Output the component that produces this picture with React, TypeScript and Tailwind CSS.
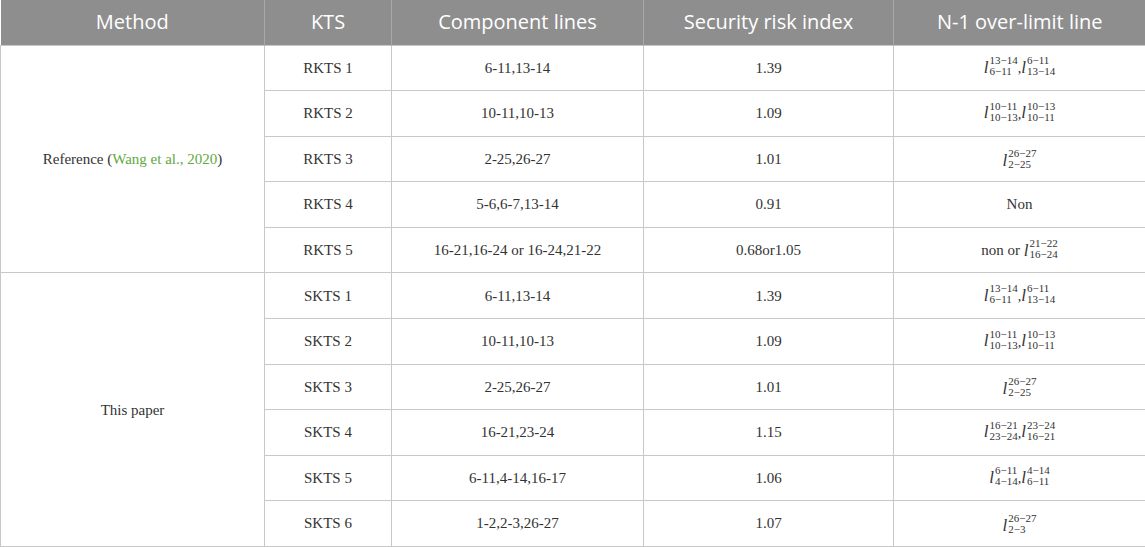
import React from "react";

type Line = { sup: string; sub: string };

type Row = {
  kts: string;
  lines: string;
  risk: string;
  over: React.ReactNode;
};

function L({ sup, sub }: Line) {
  return (
    <span className="inline-flex items-center align-middle">
      <span className="italic text-[17px] leading-none pr-[1px]">l</span>
      <span className="inline-flex flex-col text-left text-[11px] leading-[11px] -mt-[2px]">
        <span>{sup}</span>
        <span>{sub}</span>
      </span>
    </span>
  );
}

function Pair({ a, b }: { a: Line; b: Line }) {
  return (
    <span className="inline-flex items-end">
      <L {...a} />
      <span className="text-[14px] leading-none mb-[1px]">,</span>
      <L {...b} />
    </span>
  );
}

const reference: Row[] = [
  {
    kts: "RKTS 1",
    lines: "6-11,13-14",
    risk: "1.39",
    over: <Pair a={{ sup: "13−14", sub: "6−11" }} b={{ sup: "6−11", sub: "13−14" }} />,
  },
  {
    kts: "RKTS 2",
    lines: "10-11,10-13",
    risk: "1.09",
    over: <Pair a={{ sup: "10−11", sub: "10−13" }} b={{ sup: "10−13", sub: "10−11" }} />,
  },
  {
    kts: "RKTS 3",
    lines: "2-25,26-27",
    risk: "1.01",
    over: <L sup="26−27" sub="2−25" />,
  },
  { kts: "RKTS 4", lines: "5-6,6-7,13-14", risk: "0.91", over: "Non" },
  {
    kts: "RKTS 5",
    lines: "16-21,16-24 or 16-24,21-22",
    risk: "0.68or1.05",
    over: (
      <span className="inline-flex items-center">
        non or&nbsp;
        <L sup="21−22" sub="16−24" />
      </span>
    ),
  },
];

const paper: Row[] = [
  {
    kts: "SKTS 1",
    lines: "6-11,13-14",
    risk: "1.39",
    over: <Pair a={{ sup: "13−14", sub: "6−11" }} b={{ sup: "6−11", sub: "13−14" }} />,
  },
  {
    kts: "SKTS 2",
    lines: "10-11,10-13",
    risk: "1.09",
    over: <Pair a={{ sup: "10−11", sub: "10−13" }} b={{ sup: "10−13", sub: "10−11" }} />,
  },
  {
    kts: "SKTS 3",
    lines: "2-25,26-27",
    risk: "1.01",
    over: <L sup="26−27" sub="2−25" />,
  },
  {
    kts: "SKTS 4",
    lines: "16-21,23-24",
    risk: "1.15",
    over: <Pair a={{ sup: "16−21", sub: "23−24" }} b={{ sup: "23−24", sub: "16−21" }} />,
  },
  {
    kts: "SKTS 5",
    lines: "6-11,4-14,16-17",
    risk: "1.06",
    over: <Pair a={{ sup: "6−11", sub: "4−14" }} b={{ sup: "4−14", sub: "6−11" }} />,
  },
  {
    kts: "SKTS 6",
    lines: "1-2,2-3,26-27",
    risk: "1.07",
    over: <L sup="26−27" sub="2−3" />,
  },
];

const td = "border border-[#c8c8c8] text-center align-middle";

export default function App() {
  return (
    <div className="w-[1145px] h-[547px] overflow-hidden bg-white">
      <table className="w-[1145px] table-fixed border-collapse text-[15px] text-[#333] [font-family:'Liberation_Serif',serif]">
        <colgroup>
          <col className="w-[264px]" />
          <col className="w-[127px]" />
          <col className="w-[252px]" />
          <col className="w-[250px]" />
          <col className="w-[252px]" />
        </colgroup>
        {/* header */}
        <thead>
          <tr className="h-[45px] bg-[#8e8e8e] text-white text-[20px] font-normal [font-family:'Open_Sans',sans-serif]">
            <th className="font-normal border-r border-[#a8a8a8]">Method</th>
            <th className="font-normal border-r border-[#a8a8a8]">KTS</th>
            <th className="font-normal border-r border-[#a8a8a8]">Component lines</th>
            <th className="font-normal border-r border-[#a8a8a8]">Security risk index</th>
            <th className="font-normal">N-1 over-limit line</th>
          </tr>
        </thead>
        <tbody>
          {reference.map((r, i) => (
            <tr key={r.kts} className="h-[45.6px]">
              {i === 0 && (
                <td rowSpan={reference.length} className={td}>
                  Reference (<span className="text-[#5fa83f]">Wang et al., 2020</span>)
                </td>
              )}
              <td className={td}>{r.kts}</td>
              <td className={td}>{r.lines}</td>
              <td className={td}>{r.risk}</td>
              <td className={td}>{r.over}</td>
            </tr>
          ))}
          {paper.map((r, i) => (
            <tr key={r.kts} className="h-[45.6px]">
              {i === 0 && (
                <td rowSpan={paper.length} className={td}>
                  This paper
                </td>
              )}
              <td className={td}>{r.kts}</td>
              <td className={td}>{r.lines}</td>
              <td className={td}>{r.risk}</td>
              <td className={td}>{r.over}</td>
            </tr>
          ))}
        </tbody>
      </table>
    </div>
  );
}
